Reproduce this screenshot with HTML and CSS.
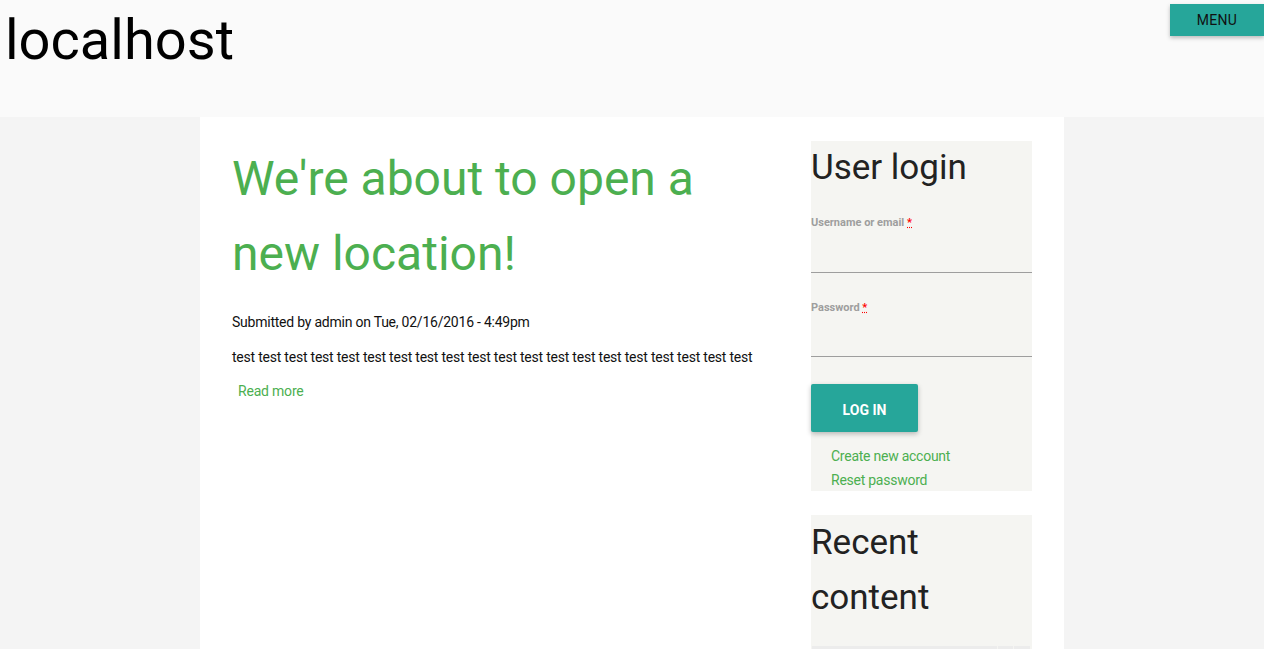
FILE: index.html
```html
<!DOCTYPE html>
<html>
<head>
<meta charset="utf-8">
<link rel="stylesheet" href="styles.css">
</head>
<body>
<header class="site-header">
  <div class="site-name">localhost</div>
  <button class="menu-btn">MENU</button>
</header>
<div class="page">
  <main class="content">
    <h1 class="node-title">We're about to open a new location!</h1>
    <div class="meta">Submitted by admin on Tue, 02/16/2016 - 4:49pm</div>
    <p class="body-text">test test test test test test test test test test test test test test test test test test test test</p>
    <a class="read-more" href="#">Read more</a>
  </main>
  <aside class="sidebar">
    <section class="block login">
      <h2 class="block-title">User login</h2>
      <div class="field">
        <label>Username or email <abbr>*</abbr></label>
        <div class="input"></div>
      </div>
      <div class="field">
        <label>Password <abbr>*</abbr></label>
        <div class="input"></div>
      </div>
      <button class="login-btn">LOG IN</button>
      <ul class="links">
        <li><a href="#">Create new account</a></li>
        <li><a href="#">Reset password</a></li>
      </ul>
    </section>
    <section class="block recent">
      <h2 class="block-title recent-title">Recent content</h2>
      <div class="table-row"><span class="c1"></span><span class="c2"></span><span class="c3"></span></div>
    </section>
  </aside>
</div>
</body>
</html>
```
FILE: styles.css
```css
html, body {
  margin: 0;
  padding: 0;
}
body {
  background: #f4f4f4;
  font-family: Roboto, "Liberation Sans", sans-serif;
  color: #222;
  height: 649px;
  overflow: hidden;
}
.site-header {
  background: #fafafa;
  height: 117px;
  display: flex;
  justify-content: space-between;
  align-items: flex-start;
}
.site-name {
  font-size: 56px;
  line-height: 1;
  color: #000;
  padding: 12px 0 0 5px;
}
.menu-btn {
  margin-top: 4px;
  width: 94px;
  height: 32px;
  background: #26a69a;
  border: none;
  color: #111;
  font-family: Roboto, "Liberation Sans", sans-serif;
  font-size: 14px;
  letter-spacing: 0.3px;
  box-shadow: 0 2px 4px rgba(0,0,0,0.25);
  padding: 0;
}
.page {
  width: 864px;
  margin: 0 auto;
  background: #fff;
  display: flex;
  min-height: 532px;
}
.content {
  width: 547px;
  padding: 0 0 0 32px;
}
.node-title {
  margin: 24px 0 0;
  font-size: 48px;
  font-weight: 400;
  line-height: 75px;
  color: #4caf50;
}
.meta {
  margin-top: 21px;
  font-size: 14px;
  line-height: 20px;
  letter-spacing: -0.23px;
  color: #111;
}
.body-text {
  margin: 15px 0 0;
  font-size: 14px;
  line-height: 20px;
  letter-spacing: -0.22px;
  color: #111;
}
.read-more {
  display: inline-block;
  margin: 14px 0 0 6px;
  font-size: 14px;
  line-height: 20px;
  letter-spacing: -0.2px;
  color: #4caf50;
  text-decoration: none;
}
.sidebar {
  width: 221px;
  margin-left: 32px;
  padding-top: 24px;
}
.block {
  background: #f5f5f2;
}
.login {
  height: 350px;
}
.block-title {
  margin: 0;
  font-size: 35px;
  font-weight: 400;
  line-height: 54px;
  color: #222;
}
.field {
  padding-top: 20px;
}
.field label {
  display: block;
  font-size: 11px;
  font-weight: 700;
  color: #9e9e9e;
  line-height: 14px;
}
.field abbr {
  color: #f00;
  text-decoration: underline dotted #f00;
  font-weight: 700;
}
.input {
  height: 36px;
  border-bottom: 1px solid #9e9e9e;
}
.login .field:first-of-type {
  padding-top: 21px;
}
.login .field:first-of-type .input {
  height: 42px;
}
.login .field + .field {
  padding-top: 28px;
}
.login .field + .field .input {
  height: 41px;
}
.login-btn {
  margin-top: 27px;
  width: 107px;
  height: 48px;
  background: #26a69a;
  color: #fff;
  border: none;
  border-radius: 2px;
  font-family: Roboto, "Liberation Sans", sans-serif;
  font-size: 14px;
  font-weight: 700;
  box-shadow: 0 2px 5px rgba(0,0,0,0.25);
  padding: 4px 0 0;
}
.links {
  list-style: none;
  margin: 12px 0 0;
  padding: 0 0 0 20px;
}
.links li {
  font-size: 14px;
  line-height: 24px;
  letter-spacing: -0.25px;
}
.links a {
  color: #4caf50;
  text-decoration: none;
}
.recent {
  margin-top: 24px;
  height: 140px;
}
.recent-title {
  padding-top: 0;
  line-height: 55px;
  padding-bottom: 21px;
}
.table-row {
  display: flex;
  height: 6px;
  margin-top: 0;
  padding: 0 1px;
}
.table-row span {
  background: #ececec;
  height: 6px;
}
.table-row .c1 { width: 185px; }
.table-row .c2 { width: 15px; margin-left: 1px; }
.table-row .c3 { width: 16px; margin-left: 1px; }
```
